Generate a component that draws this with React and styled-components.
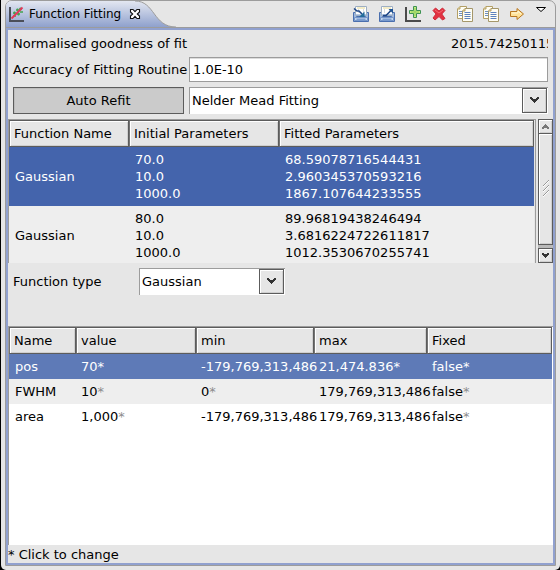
import React from "react";
import styled, { createGlobalStyle, css } from "styled-components";

const Global = createGlobalStyle`
  * { box-sizing: border-box; }
  body { margin: 0; background: #e6e6e6; }
  body, button, input, select, table {
    font-family: "DejaVu Sans", Verdana, sans-serif;
    font-size: 13px;
    line-height: 17px;
    color: #000;
  }
`;

const Shell = styled.div`
  min-height: 100vh;
  display: flex;
  background: #000;
`;

const Frame = styled.main`
  flex: 1;
  min-width: 0;
  display: flex;
  margin-left: 1px;
  padding: 0 4px 4px;
  background: #e6e6e6;
  border-radius: 0 0 5px 5px;
`;

const Panel = styled.section`
  flex: 1;
  min-width: 0;
  display: flex;
  flex-direction: column;
  border: 1px solid #9c9c9c;
  border-radius: 7px 7px 0 0;
`;

const TitleBar = styled.header`
  display: flex;
  align-items: center;
  justify-content: space-between;
  height: 27px;
  border-bottom: 1px solid #9c9c9c;
`;

const Tab = styled.div`
  position: relative;
  display: flex;
  align-items: center;
  height: 26px;
  width: 168px;
  padding: 0 0 0 2px;
`;

const TabShape = styled.svg`
  position: absolute;
  left: 0;
  top: 0;
`;

const TabIcon = styled.span`
  position: relative;
  display: flex;
`;

const TabTitle = styled.h1`
  position: relative;
  margin: 0 8px 0 4px;
  font-size: 12px;
  font-weight: normal;
  white-space: nowrap;
`;

const IconButton = styled.button`
  position: relative;
  display: flex;
  padding: 0;
  border: 0;
  background: none;
`;

const Toolbar = styled.div`
  display: flex;
  align-items: center;
  gap: 10px;
  padding-right: 8px;
`;

const Body = styled.div`
  flex: 1;
  min-height: 0;
  display: flex;
  flex-direction: column;
  border: 2px solid #91a1cf;
`;

const FitForm = styled.div`
  display: grid;
  grid-template-columns: 171px minmax(0, 1fr);
  column-gap: 5px;
  row-gap: 5px;
  align-items: center;
  padding: 5px;
`;

const Label = styled.label`
  white-space: nowrap;
`;

const Goodness = styled.output`
  justify-self: end;
  width: 97px;
  overflow: hidden;
  white-space: nowrap;
`;

const TextBox = styled.input`
  width: 100%;
  height: 25px;
  padding: 0 3px;
  border: 1px solid #9c9c9c;
  background: #fff;
  box-shadow: inset 0 1px #dcdcdc;
  outline: 0;
`;

const PushButton = styled.button`
  height: 27px;
  padding: 0;
  border: 1px solid #5c5c5c;
  background: #cbcbcb;
  box-shadow: inset 1px 1px #bdbdbd;
`;

const ComboBox = styled.div`
  display: grid;
  grid-template-columns: minmax(0, 1fr) 26px;
  height: 27px;
  border: solid #9c9c9c;
  border-width: 1px 0 0 1px;
  background: #fff;
`;

const Select = styled.select`
  grid-area: 1 / 1 / 2 / 3;
  appearance: none;
  padding: 0 28px 2px 2px;
  border: 0;
  background: transparent;
  outline: 0;
`;

const raised = css`
  border: 1px solid #5c5c5c;
  background: #e6e6e6;
  box-shadow: inset 1px 1px #fff, inset -1px -1px #cfcfcf;
`;

const ComboArrow = styled.span`
  grid-area: 1 / 2;
  display: flex;
  align-items: center;
  justify-content: center;
  margin-right: 1px;
  height: 25px;
  pointer-events: none;
  ${raised}
`;

const FunctionArea = styled.div`
  display: flex;
  height: 144px;
`;

const TableView = styled.div`
  flex: 1;
  min-width: 0;
  overflow: hidden;
  border: solid #9c9c9c;
  border-width: 1px ${(p) => (p.$framed ? "1px" : "0")} 0 1px;
  padding-right: 1px;
  background: ${(p) => (p.$framed ? "#e6e6e6" : "#fff")};
`;

const Table = styled.table`
  width: 100%;
  table-layout: fixed;
  border-collapse: separate;
  border-spacing: 0;
`;

const Column = styled.col`
  width: ${(p) => (p.$width ? `${p.$width}px` : "auto")};
`;

const HeadCell = styled.th`
  height: 27px;
  padding: 0 4px;
  font-weight: normal;
  text-align: left;
  white-space: nowrap;
  ${raised}
  border-left-color: #747474;
`;

const Row = styled.tr`
  height: ${(p) => (p.$tall ? "59px" : "25px")};
  background: ${(p) => p.$background};
  color: ${(p) => (p.$selected ? "#fff" : "#000")};
`;

const Cell = styled.td`
  padding: 0 0 0 ${(p) => (p.$indent ? "6px" : "5px")};
  white-space: pre;
`;

const Star = styled.span`
  color: ${(p) => (p.$selected ? "#fff" : "#8c8c8c")};
`;

const ScrollBar = styled.div`
  display: flex;
  flex-direction: column;
  width: 15px;
  margin-left: 2px;
  background: #b9b9b9;
`;

const ScrollButton = styled.button`
  display: flex;
  align-items: center;
  justify-content: center;
  height: 15px;
  padding: 0;
  ${raised}
`;

const ScrollThumb = styled.div`
  flex: 1;
  display: flex;
  align-items: center;
  justify-content: center;
  margin-bottom: 3px;
  ${raised}
  border-top: 0;
`;

const TypeRow = styled.div`
  display: grid;
  grid-template-columns: 121px 146px;
  column-gap: 5px;
  align-items: center;
  padding: 5px 5px 31px;
`;

const Status = styled.footer`
  padding-top: 1px;
`;

const ChartIcon = () => (
  <svg width="17" height="17" viewBox="0 0 17 17">
    <path d="M2 1V15H16" fill="none" stroke="#4b4f59" strokeWidth="2" />
    <path d="M5 7h3M6.500 5.500v3M8 4h3M9.500 2.500v3M11 3h3M12.500 1.500v3M5 10h3M9 8h3M10.500 6.500v3M12 6h3" stroke="#42a352" strokeWidth="1.500" />
    <path d="M3.500 12.500 14.500 1.500" stroke="#e53558" strokeWidth="1.800" />
  </svg>
);

const CloseIcon = () => (
  <svg width="12" height="12" viewBox="0 0 12 12">
    <path d="M1.500 1.500H4L6 3.700 8 1.500h2.500V4L8.300 6l2.200 2v2.500H8L6 8.300 4 10.500H1.500V8l2.200-2-2.200-2z" fill="#fff" stroke="#111" strokeWidth="1.100" />
  </svg>
);

const DiskIcon = ({ out }) => (
  <svg width="16" height="16" viewBox="0 0 16 16">
    <path d="M.5 6.500h3v4h9v-4h3v9H.5z" fill="#9db8df" stroke="#4a6fae" />
    <path d="M1.500 11.500h13v3h-13z" fill="#c5d7ee" stroke="#7696c9" />
    <path d="M3.500 12.500h9v2h-9z" fill="#7d9ed0" />
    <path d="M2.500.5h11v9h-11z" fill="#fff" stroke="#9eafc3" />
    <path d="M4 1h8v2H4z" fill="#f3ecc8" />
    <path d="M3 8.500h10" stroke="#b9cce6" />
    <path d="M5.500 3v4M10.500 3v4" stroke="#d6dce2" />
    {out ? (
      <>
        <path d="M4 9.500h3L12 4.500" fill="none" stroke="#1d4585" strokeWidth="1.600" />
        <path d="M9.500 3H14v4.500z" fill="#1f5292" />
      </>
    ) : (
      <>
        <path d="M1 2.500 4 5h2l3 3" fill="none" stroke="#1d4585" strokeWidth="1.600" />
        <path d="M11.500 5.500V11H6z" fill="#236c9b" />
      </>
    )}
  </svg>
);

const AddIcon = () => (
  <svg width="16" height="16" viewBox="0 0 16 16">
    <path d="M1 1v14H16" fill="none" stroke="#4b4b4b" strokeWidth="2" />
    <path d="M8.500.5h3v4h4v3h-4v4h-3v-4h-4v-3h4z" fill="#c9ea80" stroke="#3e9254" />
    <path d="M10 2v8M6 6h8" stroke="#8bcf5e" />
  </svg>
);

const DeleteIcon = () => (
  <svg width="16" height="16" viewBox="0 0 16 16">
    <path d="M2 4.500 4.500 2 8 5l3.500-3L14 4.500 10.800 8 14 12.500 11.500 14 8 10.500 4 14 2 12l3-4z" fill="#e23241" stroke="#cf2c3b" strokeLinejoin="round" />
    <path d="m4 4 4 3 4-3" fill="none" stroke="#f26c72" />
  </svg>
);

const CopyIcon = () => (
  <svg width="16" height="16" viewBox="0 0 16 16">
    <path d="M.5 3 3 .5h6.500v12h-9z" fill="#fffef4" stroke="#b4a067" />
    <path d="M2 5.500h3M2 7.500h3M2 9.500h3" stroke="#6d8fc1" />
    <path d="m5.500 5 2.500-2.500h7.500v13h-10z" fill="#fffef4" stroke="#a5976a" />
    <path d="M7.500 6.500h6M7.500 8.500h6M7.500 10.500h6M7.500 12.500h6" stroke="#5d83bd" />
    <path d="M3 .5V3H.5M8 2.500V5H5.500" fill="#e6d49b" stroke="#b4a067" />
  </svg>
);

const ArrowIcon = () => (
  <svg width="16" height="16" viewBox="0 0 16 16">
    <path d="M1.500 5.500H8v-3L14.500 8 8 13.500v-3H1.500z" fill="#ffe299" stroke="#b87722" />
    <path d="M3 7h6V5l3 3" fill="none" stroke="#fff7d7" />
  </svg>
);

const MenuIcon = () => (
  <svg width="12" height="16" viewBox="0 0 12 16">
    <path d="M1.500 1.500h9L6 5.500z" fill="#fff" stroke="#000" />
  </svg>
);

const DownGlyph = () => (
  <svg width="9" height="7" viewBox="0 0 9 7" shapeRendering="crispEdges">
    <path d="M0 0h2v1h1v1h3V1h1V0h2v2H8v1H7v1H6v1H5v1H4V5H3V4H2V3H1V2H0z" fill="#333" />
  </svg>
);

const ScrollGlyph = ({ up }) => (
  <svg width="7" height="6" viewBox="0 0 7 6" shapeRendering="crispEdges">
    {up ? (
      <path d="M3 0h1v1h1v1h1v1h1v2H5V4H2v1H0V3h1V2h1V1h1z" fill="#777" />
    ) : (
      <path d="M0 0h2v1h3V0h2v2H6v1H5v1H4v1H3V4H2V3H1V2H0z" fill="#333" />
    )}
  </svg>
);

const Grip = () => (
  <svg width="7" height="18" viewBox="0 0 7 18">
    <path d="m1 6 6-6M1 11l6-6M1 16l6-6" stroke="#999" />
    <path d="m1 7 6-6M1 12l6-6M1 17l6-6" stroke="#fff" />
  </svg>
);

const tools = [
  ["Import functions", <DiskIcon />],
  ["Export functions", <DiskIcon out />],
  ["Add function", <AddIcon />],
  ["Delete function", <DeleteIcon />],
  ["Copy initial parameters", <CopyIcon />],
  ["Copy fitted parameters", <CopyIcon />],
  ["Next", <ArrowIcon />],
  ["View menu", <MenuIcon />],
];

const functions = [
  { name: "Gaussian", initial: "70.0\n10.0\n1000.0", fitted: "68.59078716544431\n2.960345370593216\n1867.107644233555", selected: true },
  { name: "Gaussian", initial: "80.0\n10.0\n1000.0", fitted: "89.96819438246494\n3.6816224722611817\n1012.3530670255741" },
];

const parameters = [
  { name: "pos", values: ["70*", "-179,769,313,486", "21,474.836*", "false*"], selected: true, background: "#5e7ab7" },
  { name: "FWHM", values: ["10*", "0*", "179,769,313,486", "false*"], background: "#eee" },
  { name: "area", values: ["1,000*", "-179,769,313,486", "179,769,313,486", "false*"], background: "#fff" },
];

function Combo({ id, label, value }) {
  return (
    <ComboBox>
      <Select id={id} aria-label={label} defaultValue={value}>
        <option>{value}</option>
      </Select>
      <ComboArrow><DownGlyph /></ComboArrow>
    </ComboBox>
  );
}

function Editable({ text, selected }) {
  const starred = text.endsWith("*");
  return (
    <>
      {starred ? text.slice(0, -1) : text}
      {starred && <Star $selected={selected}>*</Star>}
    </>
  );
}

export default function App() {
  return (
    <Shell>
      <Global />
      <Frame>
        <Panel>
          <TitleBar>
            <Tab>
              <TabShape width="175" height="26" viewBox="0 0 175 26" aria-hidden="true">
                <defs>
                  <linearGradient id="tab" x1="0" y1="0" x2="0" y2="1">
                    <stop offset="0" stopColor="#e3e7f1" />
                    <stop offset="1" stopColor="#8fa1cd" />
                  </linearGradient>
                </defs>
                <path d="M0 26V6Q0 0 6 0H129C149 0 147 26 170 26Z" fill="url(#tab)" />
                <path d="M129 0C149 0 147 26 170 26" fill="none" stroke="#9c9c9c" />
              </TabShape>
              <TabIcon><ChartIcon /></TabIcon>
              <TabTitle>Function Fitting</TabTitle>
              <IconButton aria-label="Close"><CloseIcon /></IconButton>
            </Tab>
            <Toolbar>
              {tools.map(([name, icon]) => (
                <IconButton key={name} aria-label={name}>{icon}</IconButton>
              ))}
            </Toolbar>
          </TitleBar>
          <Body>
            <FitForm>
              <Label htmlFor="goodness">Normalised goodness of fit</Label>
              <Goodness id="goodness">2015.74250115</Goodness>
              <Label htmlFor="accuracy">Accuracy of Fitting Routine</Label>
              <TextBox id="accuracy" defaultValue="1.0E-10" />
              <PushButton>Auto Refit</PushButton>
              <Combo id="method" label="Fitting method" value="Nelder Mead Fitting" />
            </FitForm>
            <FunctionArea>
              <TableView $framed>
                <Table>
                  <colgroup><Column $width={120} /><Column $width={150} /><Column /></colgroup>
                  <thead>
                    <tr>
                      <HeadCell>Function Name</HeadCell>
                      <HeadCell>Initial Parameters</HeadCell>
                      <HeadCell>Fitted Parameters</HeadCell>
                    </tr>
                  </thead>
                  <tbody>
                    {functions.map((f) => (
                      <Row key={f.initial} $tall $selected={f.selected} $background={f.selected ? "#4464ac" : "#eee"}>
                        <Cell $indent>{f.name}</Cell>
                        <Cell $indent>{f.initial}</Cell>
                        <Cell $indent>{f.fitted}</Cell>
                      </Row>
                    ))}
                  </tbody>
                </Table>
              </TableView>
              <ScrollBar>
                <ScrollButton aria-label="Scroll up"><ScrollGlyph up /></ScrollButton>
                <ScrollThumb><Grip /></ScrollThumb>
                <ScrollButton aria-label="Scroll down"><ScrollGlyph /></ScrollButton>
              </ScrollBar>
            </FunctionArea>
            <TypeRow>
              <Label htmlFor="type">Function type</Label>
              <Combo id="type" value="Gaussian" />
            </TypeRow>
            <TableView>
              <Table>
                <colgroup>
                  <Column $width={67} /><Column $width={120} /><Column $width={118} /><Column $width={113} /><Column />
                </colgroup>
                <thead>
                  <tr>
                    {["Name", "value", "min", "max", "Fixed"].map((h) => <HeadCell key={h}>{h}</HeadCell>)}
                  </tr>
                </thead>
                <tbody>
                  {parameters.map((p) => (
                    <Row key={p.name} $selected={p.selected} $background={p.background}>
                      <Cell $indent>{p.name}</Cell>
                      {p.values.map((v, i) => (
                        <Cell key={i}><Editable text={v} selected={p.selected} /></Cell>
                      ))}
                    </Row>
                  ))}
                </tbody>
              </Table>
            </TableView>
            <Status>* Click to change</Status>
          </Body>
        </Panel>
      </Frame>
    </Shell>
  );
}
